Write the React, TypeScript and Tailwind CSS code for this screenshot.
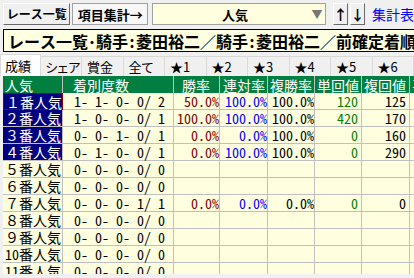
import React from 'react';

type Row = {
  name: string;
  stats: string;
  win?: string;
  rentai?: string;
  fuku?: string;
  tan?: string;
  fukuKai?: string;
  placed?: boolean;
  selected?: boolean;
};

const rows: Row[] = [
  { name: '１番人気', stats: '1- 1- 0- 0/ 2', win: '50.0%', rentai: '100.0%', fuku: '100.0%', tan: '120', fukuKai: '125', placed: true, selected: true },
  { name: '２番人気', stats: '1- 0- 0- 0/ 1', win: '100.0%', rentai: '100.0%', fuku: '100.0%', tan: '420', fukuKai: '170', placed: true },
  { name: '３番人気', stats: '0- 0- 1- 0/ 1', win: '0.0%', rentai: '0.0%', fuku: '100.0%', tan: '0', fukuKai: '160', placed: true },
  { name: '４番人気', stats: '0- 1- 0- 0/ 1', win: '0.0%', rentai: '100.0%', fuku: '100.0%', tan: '0', fukuKai: '290', placed: true },
  { name: '５番人気', stats: '0- 0- 0- 0/ 0' },
  { name: '６番人気', stats: '0- 0- 0- 0/ 0' },
  { name: '７番人気', stats: '0- 0- 0- 1/ 1', win: '0.0%', rentai: '0.0%', fuku: '0.0%', tan: '0', fukuKai: '0' },
  { name: '８番人気', stats: '0- 0- 0- 0/ 0' },
  { name: '９番人気', stats: '0- 0- 0- 0/ 0' },
  { name: '10番人気', stats: '0- 0- 0- 0/ 0' },
  { name: '11番人気', stats: '0- 0- 0- 0/ 0' },
];

const tabs = ['シェア', '賞金', '全て', '★1', '★2', '★3', '★4', '★5', '★6'];

const headers = [
  { label: '人気', w: 'w-[60px]', pad: 'pl-[2px]' },
  { label: '着別度数', w: 'w-[111px]', pad: 'pl-[10px]' },
  { label: '勝率', w: 'w-[46px]', pad: 'pl-[8px]' },
  { label: '連対率', w: 'w-[48px]', pad: 'pl-[3px]' },
  { label: '複勝率', w: 'w-[47px]', pad: 'pl-[2px]' },
  { label: '単回値', w: 'w-[47px]', pad: 'pl-[2px]' },
  { label: '複回値', w: 'w-[48px]', pad: 'pl-[2px]' },
  { label: '平', w: 'w-[40px]', pad: 'pl-[2px]' },
];

export default function App() {
  return (
    <div className="w-[414px] h-[278px] overflow-hidden bg-[#f0f0f0] text-black font-['Noto_Sans_Mono_CJK_JP','Noto_Sans_CJK_JP',monospace] text-[14px] leading-none">
      {/* toolbar */}
      <div className="flex items-center h-[28px] pl-[3px] gap-[2px] whitespace-nowrap">
        <button className="h-[22px] w-[72px] flex items-center justify-center bg-[#f0f0f0] border border-t-white border-l-white border-r-[#696969] border-b-[#696969] font-bold text-[12px]">
          レース一覧
        </button>
        <button className="h-[22px] w-[81px] flex items-center justify-center bg-[#f7f7f7] border border-[#a0a0a0] font-bold text-[13px]">
          項目集計→
        </button>
        <div className="ml-[2px] h-[22px] w-[186px] flex items-center bg-[#ffffe0] border border-[#a0a0a0]">
          <span className="flex-1 text-center font-bold text-[13px] pl-[8px]">人気</span>
          <span className="w-[16px] text-[#777] text-[11px] text-center">▼</span>
        </div>
        <button className="ml-[5px] h-[22px] w-[15px] flex items-center justify-center bg-[#f0f0f0] border border-t-white border-l-white border-r-[#696969] border-b-[#696969] font-bold">
          ↑
        </button>
        <button className="h-[22px] w-[15px] flex items-center justify-center bg-[#f0f0f0] border border-t-white border-l-white border-r-[#696969] border-b-[#696969] font-bold">
          ↓
        </button>
        <span className="ml-[5px] text-[#0000ff]">集計表</span>
      </div>

      {/* info bar */}
      <div className="mt-[1px] ml-[3px] h-[23px] flex items-center bg-[#ffffe1] border border-r-0 border-black pl-[4px] whitespace-nowrap overflow-hidden font-bold text-[16px]">
        レース一覧･騎手:菱田裕二／騎手:菱田裕二／前確定着順:
      </div>

      {/* tabs */}
      <div className="mt-[2px] h-[22px] flex items-end whitespace-nowrap font-['Noto_Sans_CJK_JP',sans-serif] [font-feature-settings:'palt'] text-[13px]">
        <div className="h-[22px] w-[46px] flex items-center pl-[4px] bg-white border border-b-0 border-[#d9d9d9]">
          成績
        </div>
        {tabs.map((t) => (
          <div
            key={t}
            className="h-[20px] w-[41.5px] shrink-0 flex items-center pl-[5px] bg-[#f0f0f0] border-r border-t border-[#d9d9d9]"
          >
            {t}
          </div>
        ))}
      </div>

      {/* grid */}
      <div className="ml-[3px] h-[198px] overflow-hidden bg-white">
        <div className="flex h-[17px] bg-[#007f40] text-white whitespace-nowrap">
          {headers.map((h) => (
            <div key={h.label} className={`${h.w} ${h.pad} shrink-0 h-full flex items-center border-r border-[#c0c0c0] overflow-hidden`}>
              {h.label}
            </div>
          ))}
        </div>
        {rows.map((r) => (
          <div key={r.name} className="flex h-[17px] whitespace-nowrap">
            <div
              className={
                r.placed
                  ? r.selected
                    ? 'w-[60px] shrink-0 flex items-center pl-[2px] bg-[#000080] text-white border border-[#800000]'
                    : 'w-[60px] shrink-0 flex items-center pl-[2px] bg-[#000080] text-white border-r border-b border-[#c0c0c0]'
                  : 'w-[60px] shrink-0 flex items-center pl-[2px] bg-[#ffffe0] border-r border-b border-[#c0c0c0]'
              }
            >
              {r.name}
            </div>
            <div className="w-[111px] shrink-0 flex items-center pl-[11px] bg-[#ffffe0] border-r border-b border-[#c0c0c0] whitespace-pre">
              {r.stats}
            </div>
            <div className="w-[46px] shrink-0 flex items-center justify-end bg-[#ffffe0] border-r border-b border-[#c0c0c0] text-[#800000]">
              {r.win}
            </div>
            <div className="w-[48px] shrink-0 flex items-center justify-end bg-[#ffffe0] border-r border-b border-[#c0c0c0] text-[#0000ff]">
              {r.rentai}
            </div>
            <div className="w-[47px] shrink-0 flex items-center justify-end bg-[#ffffe0] border-r border-b border-[#c0c0c0]">
              {r.fuku}
            </div>
            <div className="w-[47px] shrink-0 flex items-center justify-end pr-[3px] bg-[#ffffe0] border-r border-b border-[#c0c0c0] text-[#008000]">
              {r.tan}
            </div>
            <div className="w-[48px] shrink-0 flex items-center justify-end pr-[3px] bg-[#ffffe0] border-r border-b border-[#c0c0c0]">
              {r.fukuKai}
            </div>
            <div className="w-[40px] shrink-0 bg-[#ffffe0] border-b border-[#c0c0c0]" />
          </div>
        ))}
      </div>
    </div>
  );
}
